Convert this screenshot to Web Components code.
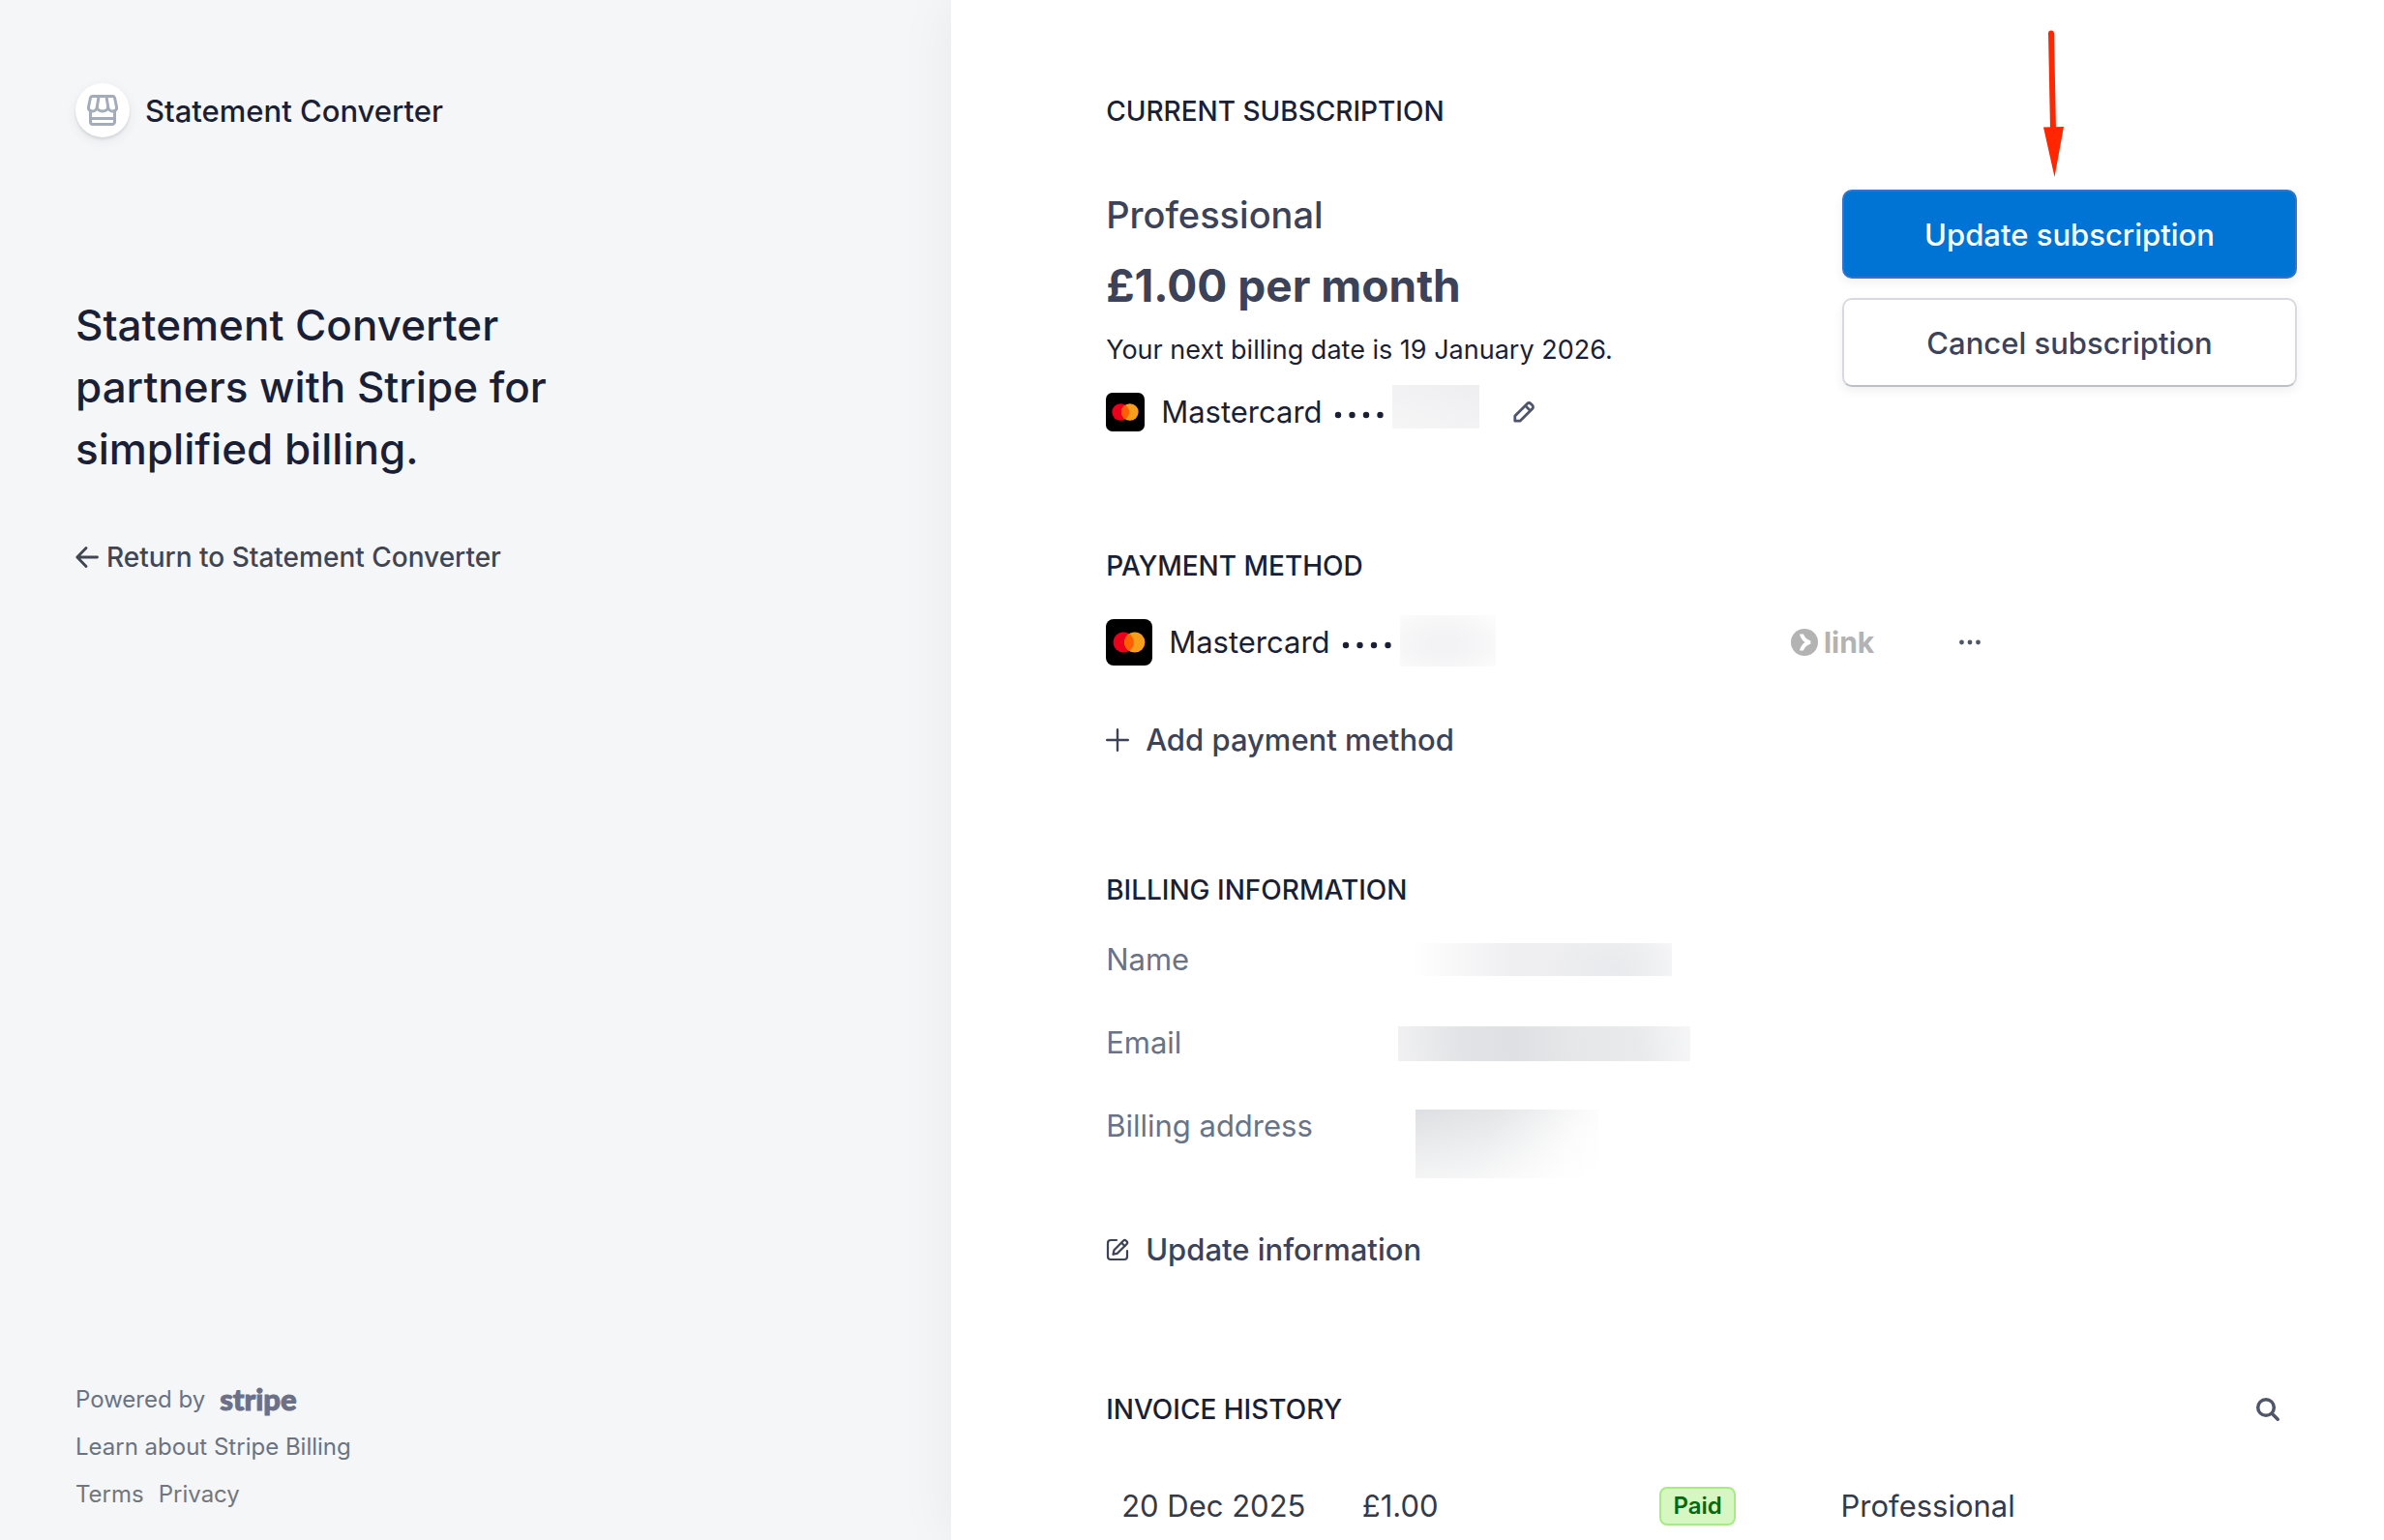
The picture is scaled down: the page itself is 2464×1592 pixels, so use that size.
<!DOCTYPE html>
<html lang="en">
<head>
<meta charset="utf-8">
<title>Billing portal</title>
<style>
  body {
    margin: 0;
    font-family: Inter, "Liberation Sans", sans-serif;
    color: #1a1f36;
    background-color: #ffffff;
  }
</style>
</head>
<body>
<billing-portal></billing-portal>

<script>
const define = (name, html) => {
  const template = document.createElement('template')
  template.innerHTML = html
  window.customElements.define(name, class extends HTMLElement {
    constructor() {
      super()
      this.attachShadow({ mode: 'open' })
      this.shadowRoot.appendChild(template.content.cloneNode(true))
    }
  })
}

// Blurred box over private values
define('redacted-value', `
  <style>
    :host {
      display: block;
      width: 90px;
      height: 45px;
      background: linear-gradient(20deg, #f6f6f7, #eeeef0);
    }
    :host([kind='card']) {
      width: 99px;
      height: 53px;
      background: radial-gradient(ellipse at 45% 55%, #f3f3f5 20%, #f7f7f8 60%, #fdfdfd 100%);
    }
    :host([kind='name']) {
      width: 283px;
      height: 34px;
      background:
        radial-gradient(ellipse 80px 50px at 78% 75%, #e9eaed, transparent),
        linear-gradient(90deg, #ffffff 5%, #efeff1 42%, #f0f0f2 80%, #f7f7f8);
    }
    :host([kind='email']) {
      width: 302px;
      height: 36px;
      background: linear-gradient(85deg, #f1f1f3, #e2e3e6 22%, #dfe0e3 40%, #e6e7e9 60%, #e9eaec 82%, #f6f6f7);
    }
    :host([kind='address']) {
      width: 189px;
      height: 71px;
      margin-left: 18px;
      background:
        linear-gradient(0deg, rgba(255,255,255,.65), rgba(255,255,255,0)),
        linear-gradient(115deg, #dedfe2, #e5e6e8 40%, #fbfbfb 80%, #ffffff);
    }
  </style>
`)

define('card-icon', `
  <style>
    :host {
      display: block;
      width: 40px;
      height: 40px;
      flex: none;
    }
    :host([large]) {
      width: 48px;
      height: 48px;
    }
    svg {
      display: block;
      width: 100%;
      height: 100%;
    }
  </style>
  <svg viewBox='0 0 48 48'>
    <rect width='48' height='48' rx='8' fill='#000000'/>
    <circle cx='18.2' cy='24' r='10.6' fill='#eb001b'/>
    <circle cx='29.8' cy='24' r='10.6' fill='#f79e1b'/>
    <path d='M24 15.1a10.6 10.6 0 0 1 0 17.8a10.6 10.6 0 0 1 0-17.8z' fill='#ff5f00'/>
  </svg>
`)

define('card-line', `
  <style>
    :host {
      display: flex;
      align-items: center;
      height: 56px;
      font-size: 31px;
      line-height: 40px;
    }
    .name {
      margin-left: 17px;
    }
    .dots {
      width: 52px;
      height: 8px;
      margin: 6px 8px 0 12px;
    }
    .value {
      align-self: flex-start;
    }
  </style>
  <slot name='icon'></slot>
  <span class='name'>Mastercard</span>
  <svg class='dots' viewBox='0 0 52 8' fill='#1a1f36'>
    <circle cx='4' cy='4' r='3.2'/><circle cx='18.5' cy='4' r='3.2'/>
    <circle cx='33' cy='4' r='3.2'/><circle cx='47.5' cy='4' r='3.2'/>
  </svg>
  <span class='value'><slot name='value'></slot></span>
  <slot></slot>
`)

define('action-button', `
  <style>
    :host {
      display: block;
    }
    button {
      box-sizing: border-box;
      display: block;
      width: 100%;
      height: 92px;
      border: 2px solid #d8dae0;
      border-bottom-color: #bdbfc6;
      border-radius: 10px;
      background-color: #ffffff;
      color: #3c4257;
      font: 500 31px Inter, sans-serif;
      box-shadow: 0 4px 10px rgba(60,66,87,.08);
      cursor: pointer;
    }
    :host([primary]) button {
      border-color: #3a72c8;
      background-color: #0074d4;
      color: #ffffff;
    }
  </style>
  <button type='button'><slot></slot></button>
`)

define('text-button', `
  <style>
    :host {
      display: block;
    }
    button {
      display: flex;
      align-items: center;
      gap: 17px;
      padding: 0;
      border: 0;
      background: none;
      color: #3c4257;
      font: 500 31px/48px Inter, sans-serif;
      cursor: pointer;
    }
  </style>
  <button type='button'><slot name='icon'></slot><slot></slot></button>
`)

define('portal-section', `
  <style>
    :host {
      display: block;
    }
    header {
      display: flex;
      align-items: center;
      justify-content: space-between;
    }
    h2 {
      margin: 0;
      font-size: 28px;
      font-weight: 450;
      line-height: 40px;
    }
  </style>
  <header><h2><slot name='title'></slot></h2><slot name='tool'></slot></header>
  <slot></slot>
`)

define('current-subscription', `
  <style>
    :host {
      display: flex;
      justify-content: space-between;
      margin-top: 61px;
    }
    .plan {
      display: flex;
      flex-direction: column;
    }
    .plan-name {
      font-size: 38px;
      font-weight: 450;
      line-height: 52px;
      color: #3c4257;
    }
    .price {
      margin: 12px 0;
      font-size: 46px;
      font-weight: 700;
      line-height: 70px;
      color: #3c4257;
    }
    .next {
      margin-bottom: 16px;
      font-size: 27px;
      line-height: 40px;
    }
    .edit {
      width: 24px;
      height: 24px;
      margin-left: 34px;
      padding: 0;
      border: 0;
      background: none;
      cursor: pointer;
    }
    .edit svg {
      display: block;
    }
    .actions {
      position: relative;
      display: flex;
      flex-direction: column;
      gap: 20px;
      width: 470px;
    }
    .arrow {
      position: absolute;
      left: 201px;
      top: -168px;
    }
  </style>
  <div class='plan'>
    <div class='plan-name'>Professional</div>
    <div class='price'>£1.00 per month</div>
    <div class='next'>Your next billing date is 19 January 2026.</div>
    <card-line>
      <card-icon slot='icon'></card-icon>
      <redacted-value slot='value'></redacted-value>
      <button class='edit' type='button' aria-label='Edit payment method'>
        <svg width='24' height='24' viewBox='0 0 24 24' fill='none' stroke='#4f566b' stroke-width='2.8' stroke-linejoin='round'>
          <path d='M2.8 21.2V16L15.6 3.2a2.4 2.4 0 0 1 3.4 0l1.8 1.8a2.4 2.4 0 0 1 0 3.4L8 21.2z'/>
          <path d='M13.6 5.4l5 5'/>
        </svg>
      </button>
    </card-line>
  </div>
  <div class='actions'>
    <svg class='arrow' width='36' height='156' viewBox='0 0 36 156' fill='#ff2600'>
      <path d='M15 6.5L17 106' stroke='#ff2600' stroke-width='6' stroke-linecap='round'/>
      <path d='M7 103.5L28 103L18.5 155z'/>
    </svg>
    <action-button primary>Update subscription</action-button>
    <action-button>Cancel subscription</action-button>
  </div>
`)

define('payment-methods', `
  <style>
    :host {
      display: flex;
      flex-direction: column;
      gap: 49px;
      margin-top: 31px;
    }
    .method {
      display: grid;
      grid-template-columns: 57.5% 14.1% auto;
      align-items: center;
    }
    .link {
      display: flex;
      align-items: center;
      gap: 6px;
      color: #b3b3b3;
      font-size: 30px;
      font-weight: 700;
      line-height: 32px;
    }
    .more {
      width: 24px;
      height: 24px;
      padding: 0;
      border: 0;
      background: none;
      cursor: pointer;
    }
    .more svg {
      display: block;
    }
  </style>
  <div class='method'>
    <card-line>
      <card-icon slot='icon' large></card-icon>
      <redacted-value slot='value' kind='card'></redacted-value>
    </card-line>
    <div class='link'>
      <svg width='28' height='28' viewBox='0 0 28 28'>
        <circle cx='14' cy='14' r='14' fill='#b3b3b3'/>
        <path d='M9 5.5h4c1 3.2 3.6 5.8 7.4 7v3c-3.8 1.2-6.4 3.8-7.4 7H9c.7-3.4 2.6-6.500 5.400-8.500C11.600 12 9.700 8.900 9 5.500z' fill='#ffffff'/>
      </svg>
      <span>link</span>
    </div>
    <button class='more' type='button' aria-label='More options'>
      <svg width='24' height='24' viewBox='0 0 24 24' fill='#4f566b'>
        <circle cx='3.5' cy='12' r='2.4'/><circle cx='12' cy='12' r='2.4'/><circle cx='20.5' cy='12' r='2.4'/>
      </svg>
    </button>
  </div>
  <text-button>
    <svg slot='icon' width='24' height='24' viewBox='0 0 24 24' stroke='#3c4257' stroke-width='2.4' stroke-linecap='round'>
      <path d='M12 1.2v21.6M1.2 12h21.6'/>
    </svg>
    Add payment method
  </text-button>
`)

define('billing-information', `
  <style>
    :host {
      display: block;
      margin-top: 32px;
    }
    dl {
      display: grid;
      grid-template-columns: 302px 1fr;
      row-gap: 46px;
      margin: 0 0 50px;
      font-size: 31px;
      line-height: 40px;
    }
    dt {
      color: #697386;
    }
    dd {
      margin: 0;
      padding-top: 3px;
    }
  </style>
  <dl>
    <dt>Name</dt><dd><redacted-value kind='name'></redacted-value></dd>
    <dt>Email</dt><dd><redacted-value kind='email'></redacted-value></dd>
    <dt>Billing address</dt><dd><redacted-value kind='address'></redacted-value></dd>
  </dl>
  <text-button>
    <svg slot='icon' width='24' height='24' viewBox='0 0 24 24' fill='none' stroke='#3c4257' stroke-width='2.2' stroke-linecap='round' stroke-linejoin='round'>
      <path d='M11 2H5a3 3 0 0 0-3 3v14a3 3 0 0 0 3 3h14a3 3 0 0 0 3-3v-6'/>
      <path d='M7.5 16.8l1-4.6L18.2 2.5a1.8 1.8 0 0 1 2.5 0l.9.9a1.8 1.8 0 0 1 0 2.5L12 15.6z'/>
      <path d='M16.2 4.8l3.2 3.2'/>
    </svg>
    Update information
  </text-button>
`)

define('invoice-table', `
  <style>
    :host {
      display: block;
      margin-top: 50px;
    }
    table {
      width: 100%;
      table-layout: fixed;
      border-collapse: collapse;
      font-size: 31px;
      line-height: 40px;
      color: #353a48;
    }
    td {
      padding: 0;
    }
    td:first-child {
      width: 21.5%;
      padding-left: 16px;
      box-sizing: border-box;
    }
    td:nth-child(2) {
      width: 25%;
    }
    td:nth-child(3) {
      width: 15.2%;
    }
    .badge {
      box-sizing: border-box;
      display: block;
      width: max-content;
      padding: 0 12px;
      border: 2px solid #a6eb84;
      border-radius: 8px;
      background-color: #d7f7c2;
      color: #05690d;
      font-size: 24px;
      font-weight: 600;
      line-height: 36px;
    }
  </style>
  <table>
    <tbody>
      <tr>
        <td>20 Dec 2025</td>
        <td>£1.00</td>
        <td><span class='badge'>Paid</span></td>
        <td>Professional</td>
      </tr>
    </tbody>
  </table>
`)

define('portal-sidebar', `
  <style>
    :host {
      display: flex;
      flex-direction: column;
      box-sizing: border-box;
      padding: 86px 78px 23px;
      background-color: #f4f6f8;
    }
    .brand {
      display: flex;
      align-items: center;
      gap: 16px;
      font-size: 31px;
      font-weight: 500;
    }
    .logo {
      display: flex;
      align-items: center;
      justify-content: center;
      width: 56px;
      height: 56px;
      border-radius: 50%;
      background-color: #ffffff;
      box-shadow: 0 2px 3px rgba(0,0,0,.1), 0 4px 12px rgba(60,66,87,.08);
    }
    h1 {
      max-width: 560px;
      margin: 162px 0 60px;
      font-size: 44px;
      font-weight: 500;
      line-height: 64px;
    }
    .return {
      display: flex;
      align-items: center;
      gap: 8px;
      color: #414552;
      font-size: 28px;
      font-weight: 500;
      line-height: 40px;
    }
    a {
      color: inherit;
      text-decoration: none;
    }
    footer {
      margin-top: auto;
      color: #6a7383;
      font-size: 24px;
      line-height: 49px;
    }
    footer div {
      display: flex;
      gap: 15px;
    }
    .stripe {
      font-family: Lato, sans-serif;
      font-size: 31px;
      font-weight: 900;
      color: #6c7086;
      -webkit-text-stroke: 1px #6c7086;
    }
    .legal {
      color: #73767c;
    }
  </style>
  <div class='brand'>
    <span class='logo'>
      <svg width='32' height='32' viewBox='0 0 32 32' fill='none' stroke='#a3acba' stroke-width='3' stroke-linejoin='round'>
        <path d='M5.5 1.5h21a2 2 0 0 1 2 1.5l2 9.5c.5 2.8-1.500 4.500-3.600 4.500-2.500 0-5-1.700-5.200-4.500 0 3-2.700 4.500-5.700 4.500s-5.700-1.500-5.700-4.500c-.2 2.800-2.700 4.500-5.200 4.500-2.100 0-4.100-1.700-3.600-4.500l2-9.500a2 2 0 0 1 2-1.500z'/>
        <path d='M12 2l-1.700 10.500M20 2l1.700 10.500M3.500 15.500v12.500a2.500 2.500 0 0 0 2.500 2.500h20a2.500 2.500 0 0 0 2.500-2.500V15.500M3.500 24.500h25'/>
      </svg>
    </span>
    <span>Statement Converter</span>
  </div>
  <h1>Statement Converter partners with Stripe for simplified billing.</h1>
  <a class='return' href='#'>
    <svg width='24' height='24' viewBox='0 0 24 24' fill='none' stroke='#414552' stroke-width='2.8' stroke-linecap='round' stroke-linejoin='round'>
      <path d='M22.500 12H2M11 2.500L1.800 12l9.200 9.500'/>
    </svg>
    <span>Return to Statement Converter</span>
  </a>
  <footer>
    <div><span>Powered by</span><a class='stripe' href='#'>stripe</a></div>
    <div><a href='#'>Learn about Stripe Billing</a></div>
    <div class='legal'><a href='#'>Terms</a><a href='#'>Privacy</a></div>
  </footer>
`)

define('billing-portal', `
  <style>
    :host {
      display: grid;
      grid-template-columns: 39.9% 1fr;
      min-height: 100vh;
    }
    main {
      position: relative;
      display: flex;
      flex-direction: column;
      gap: 111px;
      box-sizing: border-box;
      padding: 95px 90px 12px 160px;
      background-color: #ffffff;
      box-shadow: 0 0 56px rgba(0,0,0,.06);
      clip-path: inset(0 0 0 -80px);
    }
    .search {
      width: 60px;
      height: 60px;
      padding: 17px;
      border: 0;
      background: none;
      cursor: pointer;
    }
    .search svg {
      display: block;
    }
  </style>
  <portal-sidebar></portal-sidebar>
  <main>
    <portal-section>
      <span slot='title'>CURRENT SUBSCRIPTION</span>
      <current-subscription></current-subscription>
    </portal-section>
    <portal-section>
      <span slot='title'>PAYMENT METHOD</span>
      <payment-methods></payment-methods>
    </portal-section>
    <portal-section>
      <span slot='title'>BILLING INFORMATION</span>
      <billing-information></billing-information>
    </portal-section>
    <portal-section>
      <span slot='title'>INVOICE HISTORY</span>
      <button class='search' slot='tool' type='button' aria-label='Search invoices'>
        <svg width='26' height='26' viewBox='0 0 26 26' fill='none' stroke='#4f566b' stroke-width='3.5' stroke-linecap='round'>
          <circle cx='11' cy='11' r='8.3'/><path d='M17.2 17.2l6 6'/>
        </svg>
      </button>
      <invoice-table></invoice-table>
    </portal-section>
  </main>
`)
</script>
</body>
</html>
